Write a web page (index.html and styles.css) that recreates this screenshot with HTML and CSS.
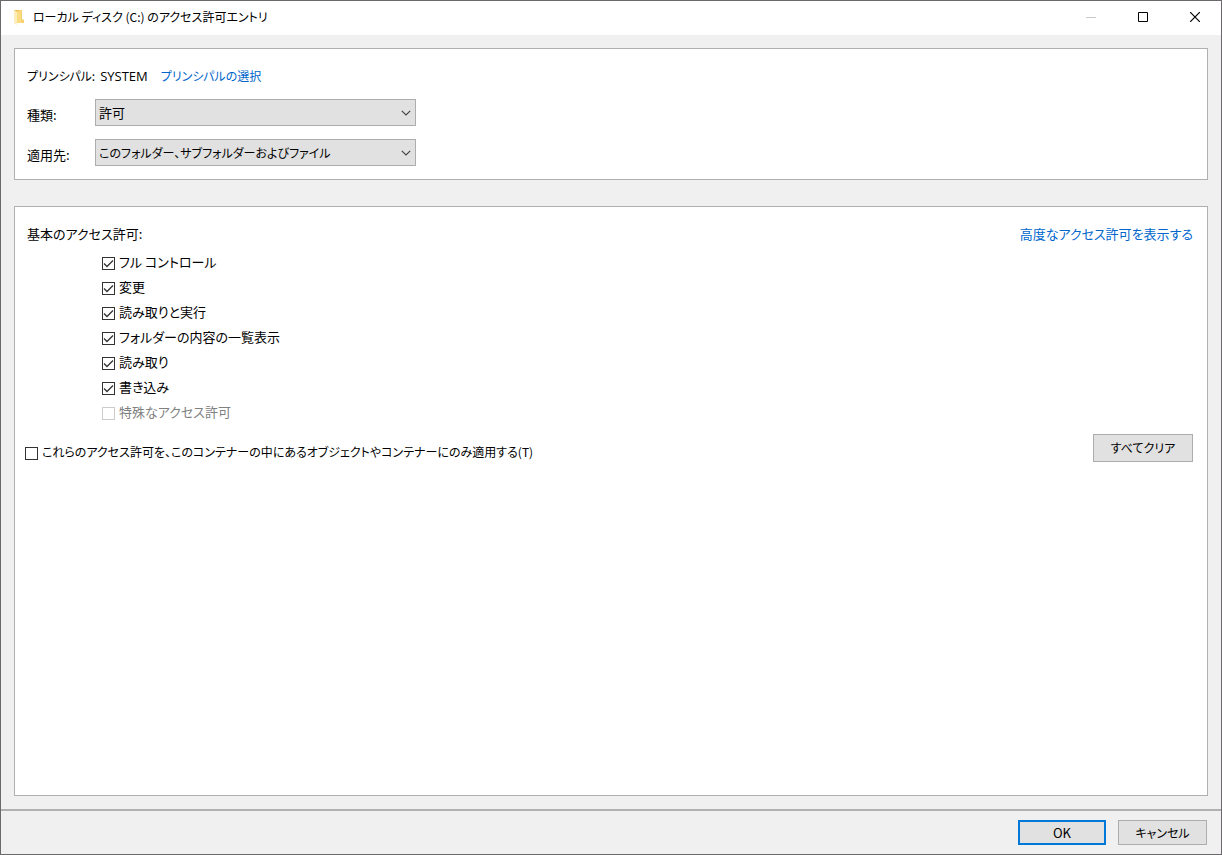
FILE: index.html
```
<!DOCTYPE html>
<html lang="ja">
<head>
    <meta charset="UTF-8">
    <meta name="viewport" content="width=device-width, initial-scale=1.0">
    <title>ローカル ディスク (C:) のアクセス許可エントリ</title>
    <link rel="stylesheet" href="styles.css">
</head>
<body>
    <div class="window">
        <header class="titlebar">
            <svg class="folder" width="12" height="16" viewBox="0 0 12 16">
                <path d="M1 1h7v13H3l-2-1z" fill="#eec25c"/>
                <path d="M8 1h1v9l2 1v3H8z" fill="#f5cf6c"/>
                <path d="M1 1l3 2v13l-3-2z" fill="#fdeebb"/>
                <path d="M4 3l4-2v11l2 2H4z" fill="#fbdc83"/>
            </svg>
            <h1>ローカル ディスク (C:) のアクセス許可エントリ</h1>
            <div class="caption-buttons">
                <button type="button" aria-label="最小化" disabled>
                    <svg width="10" height="10" viewBox="0 0 10 10"><path d="M0 5.500h10" stroke="#c8c8c8"/></svg>
                </button>
                <button type="button" aria-label="最大化">
                    <svg width="10" height="10" viewBox="0 0 10 10"><path d="M.5.5h9v9h-9z" fill="none" stroke="#000"/></svg>
                </button>
                <button type="button" aria-label="閉じる">
                    <svg width="10" height="10" viewBox="0 0 10 10"><path d="M0 0l10 10M10 0L0 10" stroke="#000" stroke-width="1.200"/></svg>
                </button>
            </div>
        </header>

        <form class="content">
            <section class="panel principal">
                <div class="principal-row">
                    <span>プリンシパル:</span>
                    <span class="latin">SYSTEM</span>
                    <a href="#">プリンシパルの選択</a>
                </div>
                <div class="field">
                    <label for="type">種類:</label>
                    <div class="dropdown">
                        <select id="type">
                            <option>許可</option>
                            <option>拒否</option>
                        </select>
                        <svg width="10" height="6" viewBox="0 0 10 6"><path d="M.8.8L5 5 9.200.8" fill="none" stroke="#444" stroke-width="1.200"/></svg>
                    </div>
                </div>
                <div class="field">
                    <label for="applies">適用先:</label>
                    <div class="dropdown">
                        <select id="applies" class="small">
                            <option>このフォルダー、サブフォルダーおよびファイル</option>
                        </select>
                        <svg width="10" height="6" viewBox="0 0 10 6"><path d="M.8.8L5 5 9.200.8" fill="none" stroke="#444" stroke-width="1.200"/></svg>
                    </div>
                </div>
            </section>

            <section class="panel permissions">
                <div class="permissions-head">
                    <h2>基本のアクセス許可:</h2>
                    <a href="#">高度なアクセス許可を表示する</a>
                </div>
                <div class="permission-list">
                    <label class="check"><input type="checkbox" checked>フル コントロール</label>
                    <label class="check"><input type="checkbox" checked>変更</label>
                    <label class="check"><input type="checkbox" checked>読み取りと実行</label>
                    <label class="check"><input type="checkbox" checked>フォルダーの内容の一覧表示</label>
                    <label class="check"><input type="checkbox" checked>読み取り</label>
                    <label class="check"><input type="checkbox" checked>書き込み</label>
                    <label class="check disabled"><input type="checkbox" disabled>特殊なアクセス許可</label>
                </div>
                <div class="apply-row">
                    <label class="check small"><input type="checkbox">これらのアクセス許可を、このコンテナーの中にあるオブジェクトやコンテナーにのみ適用する(T)</label>
                    <button type="button" class="btn clear">すべてクリア</button>
                </div>
            </section>
        </form>

        <footer class="footer">
            <button type="button" class="btn default">OK</button>
            <button type="button" class="btn">キャンセル</button>
        </footer>
    </div>
</body>
</html>
```
FILE: styles.css
```
* {
    box-sizing: border-box;
}
body {
    margin: 0;
    font-family: "Noto Sans CJK JP", sans-serif;
    font-size: 13px;
    line-height: 20px;
    font-feature-settings: "palt";
    color: #000;
}
h1, h2 {
    margin: 0;
    font-size: 13px;
    font-weight: normal;
}
a {
    color: #0066cc;
    text-decoration: none;
}
button, select, input {
    margin: 0;
    font: inherit;
    font-feature-settings: inherit;
    color: inherit;
}
.latin {
    font-family: "Open Sans", sans-serif;
    font-size: 13px;
}
.small {
    font-size: 12px;
}
.window {
    display: flex;
    flex-direction: column;
    min-height: 100vh;
    background-color: #f0f0f0;
    border: 1px solid #6b696b;
}

/* title bar */
.titlebar {
    display: flex;
    align-items: center;
    height: 34px;
    padding: 0 0 2px 12px;
    background-color: #fff;
}
.titlebar h1 {
    flex: 1;
    margin-left: 8px;
    font-size: 12px;
}
.caption-buttons {
    display: flex;
    align-self: stretch;
}
.caption-buttons button {
    display: flex;
    align-items: center;
    justify-content: center;
    width: 52px;
    padding: 0;
    background: none;
    border: none;
}

/* panels */
.content {
    flex: 1;
    display: flex;
    flex-direction: column;
    gap: 26px;
    padding: 13px;
}
.panel {
    background-color: #fff;
    border: 1px solid #b0b0b0;
}
.principal {
    display: flex;
    flex-direction: column;
    gap: 13px;
    padding: 17px 12px 13px;
}
.principal-row {
    display: flex;
    align-items: center;
    gap: 5px;
    font-size: 12px;
}
.principal-row a {
    margin-left: 8px;
}
.field {
    display: flex;
    align-items: center;
    height: 27px;
}
.field label {
    width: 68px;
    padding-top: 4px;
}
.dropdown {
    display: grid;
    align-items: center;
    width: 321px;
}
.dropdown select,
.dropdown svg {
    grid-area: 1 / 1;
}
.dropdown select {
    appearance: none;
    height: 27px;
    padding: 0 24px 0 3px;
    background-color: #e1e1e1;
    border: 1px solid #adadad;
    border-radius: 0;
}
.dropdown svg {
    justify-self: end;
    margin-right: 5px;
    pointer-events: none;
}

/* permissions */
.permissions {
    flex: 1;
    padding: 17px 14px 17px 12px;
}
.permissions-head {
    display: flex;
    justify-content: space-between;
}
.permission-list {
    display: flex;
    flex-direction: column;
    align-items: flex-start;
    gap: 5px;
    margin: 8px 0 0 75px;
}
.check {
    display: flex;
    align-items: center;
    gap: 4px;
}
.check.disabled {
    color: #808080;
}
.check input {
    appearance: none;
    width: 13px;
    height: 13px;
    margin-top: 3px;
    background-color: #fff;
    border: 1px solid #333;
}
.check input:disabled {
    border-color: #ccc;
}
.check input:checked {
    background-image: url("data:image/svg+xml,%3Csvg xmlns='http://www.w3.org/2000/svg' viewBox='0 0 11 11'%3E%3Cpath d='M1 5.500L4 8.500L10 2.500' fill='none' stroke='%23333' stroke-width='1.300'/%3E%3C/svg%3E");
}
.apply-row {
    display: flex;
    align-items: flex-end;
    justify-content: space-between;
    margin-top: 12px;
    margin-left: -2px;
}

/* buttons */
.btn {
    width: 89px;
    height: 25px;
    padding: 0;
    font-size: 12px;
    background-color: #e1e1e1;
    border: 1px solid #adadad;
}
.btn.clear {
    width: 100px;
    height: 28px;
}
.btn.default {
    width: 88px;
    font-size: 13px;
    border: 2px solid #0078d7;
}
.footer {
    display: flex;
    justify-content: flex-end;
    gap: 12px;
    padding: 9px 14px;
    border-top: 2px solid #b0b0b0;
}
```
